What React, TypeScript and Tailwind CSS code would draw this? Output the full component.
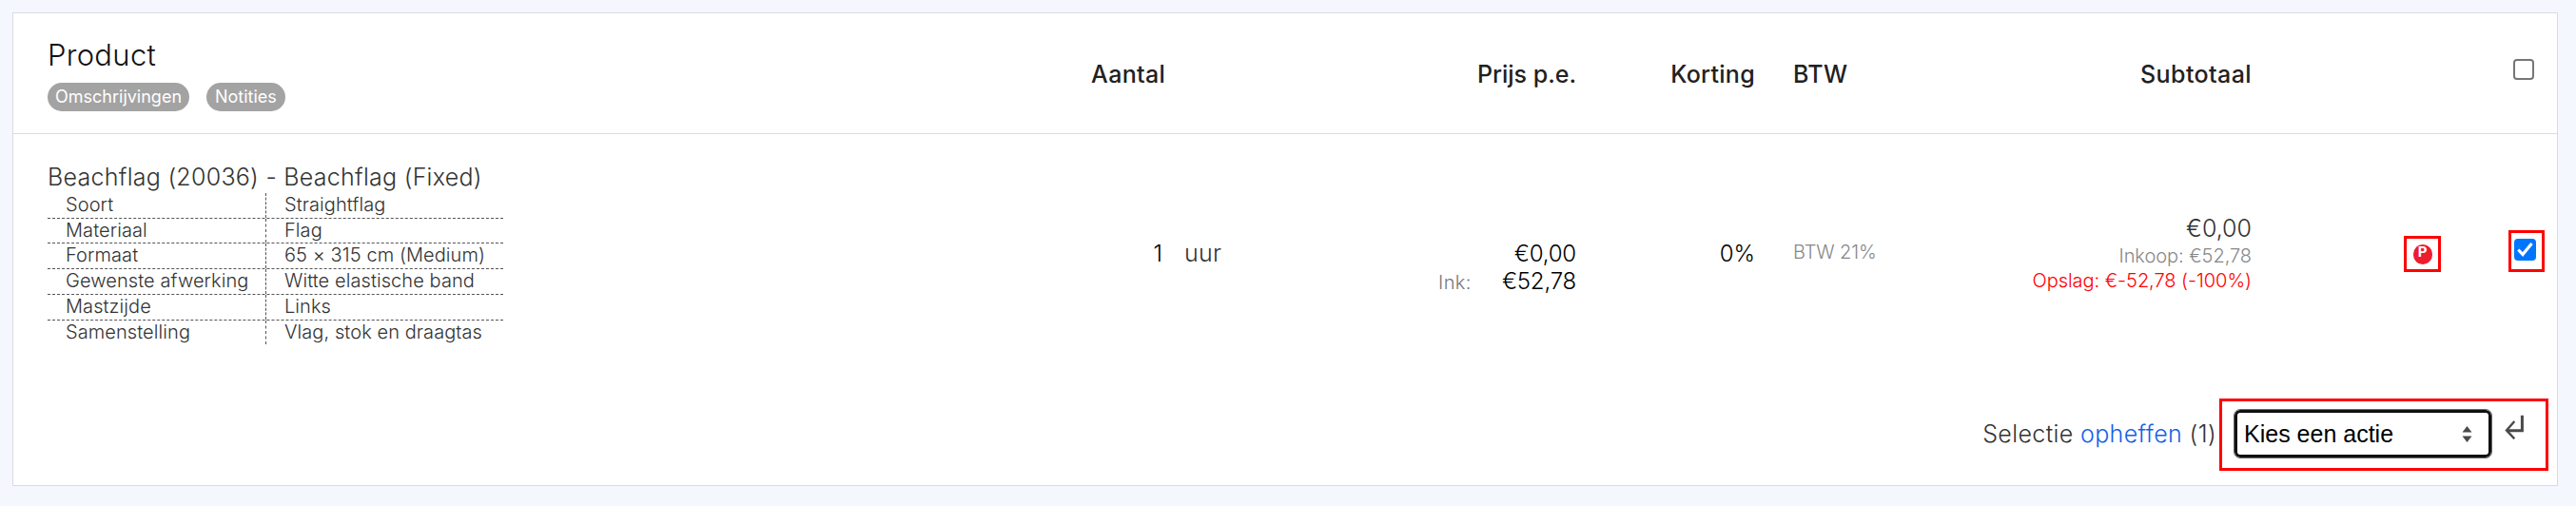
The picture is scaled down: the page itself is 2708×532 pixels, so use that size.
import clsx from "clsx"

const specs = [
  { label: "Soort", value: "Straightflag", height: "h-[27px]" },
  { label: "Materiaal", value: "Flag", height: "h-[26px]" },
  { label: "Formaat", value: "65 × 315 cm (Medium)", height: "h-[27px]" },
  { label: "Gewenste afwerking", value: "Witte elastische band", height: "h-[27px]" },
  { label: "Mastzijde", value: "Links", height: "h-[27px]" },
  { label: "Samenstelling", value: "Vlag, stok en draagtas", height: "h-[25px]" },
]

const columns = "grid grid-cols-[986px_225px_200px_232px_188px_200px_322px_237px_84px]"

const SpecTable = () => (
  <div className="w-[479px] text-[20px] leading-[24px] tracking-[0.08px] text-[#333]">
    {specs.map((spec, i) => (
      <div
        key={spec.label}
        className={clsx("flex border-[#555]", spec.height, i < specs.length - 1 && "border-b border-dashed")}
      >
        <div className="w-[230px] border-r border-dashed border-[#555] pl-[19px] whitespace-nowrap">{spec.label}</div>
        <div className="pl-[19px] whitespace-nowrap">{spec.value}</div>
      </div>
    ))}
  </div>
)

const Header = () => (
  <div className={clsx(columns, "h-[127px] border-b border-[#d9dbe0] text-[25px] leading-[30px] font-medium tracking-[0.3px] text-[#212121]")}>
    <div className="pt-[26px] pl-9">
      <div className="text-[31px] leading-[36px] font-light tracking-[0.3px] text-[#111]">Product</div>
      <div className="mt-[11px] flex gap-[18px] text-[18px] leading-[30px] font-normal tracking-normal text-white">
        <span className="h-[30px] rounded-full bg-[#a3a3a3] px-2">Omschrijvingen</span>
        <span className="h-[30px] rounded-full bg-[#a3a3a3] px-[9px]">Notities</span>
      </div>
    </div>
    <div className="pt-[49px] text-right">Aantal</div>
    <div />
    <div className="pt-[49px] text-right tracking-normal">Prijs p.e.</div>
    <div className="pt-[49px] text-right">Korting</div>
    <div className="pt-[49px] pl-10">BTW</div>
    <div className="pt-[49px] text-right tracking-[0.4px]">Subtotaal</div>
    <div />
    <div className="pt-12 pl-[38px]">
      <div className="size-[22px] rounded-[4px] border-2 border-[#767676] bg-white" />
    </div>
  </div>
)

const ProductRow = () => (
  <div className={clsx(columns, "h-[264px] text-[24px] leading-[29px] font-light text-black")}>
    <div className="pt-[31px] pl-9">
      <div className="mb-[2px] text-[25px] tracking-[0.27px] text-[#333]">Beachflag (20036) - Beachflag (Fixed)</div>
      <SpecTable />
    </div>
    <div className="pt-[111px] pr-[3px] text-right">1</div>
    <div className="pt-[111px] pl-5 text-[25px] tracking-[0.3px] text-[#333]">uur</div>
    <div className="pt-[111px] text-right tracking-[-0.2px]">
      <div>€0,00</div>
      <div className="flex items-baseline justify-end gap-8">
        <span className="text-[20px] tracking-[0.4px] text-[#777]">Ink:</span>€52,78
      </div>
    </div>
    <div className="pt-[111px] text-right">0%</div>
    <div className="pt-[110px] pl-10 text-[20px] tracking-[-0.1px] text-[#888]">BTW 21%</div>
    <div className="pt-[85px] text-right text-[20px] leading-[26px] tracking-[-0.05px]">
      <div className="mb-px text-[25px] leading-[29px] tracking-normal text-[#333]">€0,00</div>
      <div className="text-[#888]">Inkoop: €52,78</div>
      <div className="text-[#f00]">Opslag: €-52,78 (-100%)</div>
    </div>
    <div className="pt-[107px] pl-[160px]">
      <div className="flex h-[38px] w-[39px] items-center justify-center border-3 border-[#f00]">
        <div className="flex h-[21px] w-5 justify-center rounded-full bg-[#ed1c2e] text-[15px] leading-[16px] font-bold text-white">P</div>
      </div>
    </div>
    <div className="pt-[101px] pl-[33px]">
      <div className="flex h-[44px] w-[38px] border-3 border-[#f00] pt-[6px] pl-[3px]">
        <svg width="23" height="23" viewBox="0 0 23 23">
          <rect width="23" height="23" rx="4" fill="#0075ff" />
          <path d="M4.300 11.500l4.700 5L18.500 5" fill="none" stroke="#fff" strokeWidth="3.2" />
        </svg>
      </div>
    </div>
  </div>
)

const SelectionBar = () => (
  <div className="flex justify-end pt-[14px] pr-[9px] text-[25px] text-[#333]">
    <div className="pt-[22px] pr-[3px] leading-[31px] font-light tracking-[0.38px] whitespace-nowrap">
      Selectie <a className="text-[#1460e8]">opheffen</a> (1)
    </div>
    <div className="flex h-[76px] w-[346px] border-3 border-[#f00] pt-[9px] pl-[13px]">
      <div className="flex h-[50px] w-[270px] items-center justify-between rounded-[6px] border-3 border-[#101010] pr-[17px] pl-[7px] outline-1 outline-[#666]">
        <span className="pt-px font-['Liberation_Sans',sans-serif] text-[25px] text-black">Kies een actie</span>
        <svg width="11" height="17" viewBox="0 0 11 17" fill="#4a4a4a">
          <path d="M5.500 0l5 6.500H.5zM5.500 17l5-6.500H.5z" />
        </svg>
      </div>
      <svg className="mt-[5px] ml-[14px]" width="22" height="26" viewBox="0 0 22 26" fill="none" stroke="#4a4a4a">
        <path d="M18.400 .7v16H2" strokeWidth="3" />
        <path d="M10.300 7L2 16.400l8.300 8.900" strokeWidth="2.400" />
      </svg>
    </div>
  </div>
)

const App = () => {
  return (
    <div className="h-[532px] w-[2708px] bg-[#f4f7fe] pt-[13px] pl-[13px] font-['Inter',sans-serif]">
      <div className="h-[498px] w-[2676px] border border-[#d9dbe0] bg-white">
        <Header />
        <ProductRow />
        <SelectionBar />
      </div>
    </div>
  )
}

export default App
